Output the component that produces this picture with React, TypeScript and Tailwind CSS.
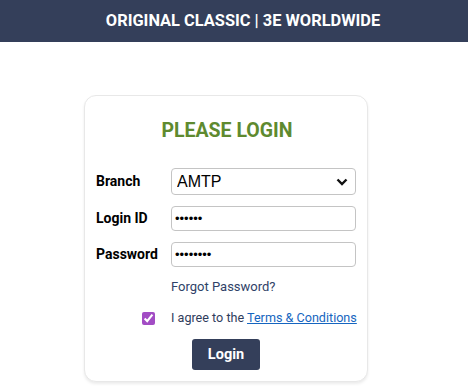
export default function App() {
  return (
    <div className="min-h-screen bg-white font-['Roboto',sans-serif]">
      <header className="h-[42px] bg-[#343f5a] flex items-center justify-center pl-[18px]">
        <h1 className="text-white font-bold text-[16.4px] tracking-[0px]">ORIGINAL CLASSIC | 3E WORLDWIDE</h1>
      </header>
      <div className="pt-[53px] pl-[84px]">
        <div className="w-[284px] bg-white border border-[#e8e8e8] rounded-[12px] shadow-[0_2px_3px_rgba(0,0,0,0.08)] px-[11px] pt-[22px] pb-[11px]">
          <h2 className="text-center text-[#5e8a2f] font-bold text-[19.5px] leading-[26px] pl-[2px]">PLEASE LOGIN</h2>
          <form className="mt-[24px] grid grid-cols-[75px_185px] items-center gap-y-[11px]">
            <label className="font-bold text-[14px] text-black">Branch</label>
            <div className="relative">
              <select className="appearance-none w-full h-[27px] border border-[#c4c4c4] rounded-[4px] pl-[5px] text-[16px] text-black font-['Liberation_Sans',Arial,sans-serif] bg-white outline-none">
                <option>AMTP</option>
              </select>
              <svg className="absolute right-[8px] top-[10px] pointer-events-none" width="12" height="8" viewBox="0 0 12 8">
                <path d="M1.5 1.5 L6 6 L10.5 1.5" fill="none" stroke="#111" strokeWidth="2.4" />
              </svg>
            </div>
            <label className="font-bold text-[14px] text-black">Login ID</label>
            <input type="password" defaultValue="123456" className="w-full h-[25px] border border-[#c4c4c4] rounded-[4px] px-[3px] text-[13px] text-black outline-none font-['Liberation_Sans',Arial,sans-serif]" />
            <label className="font-bold text-[14px] text-black">Password</label>
            <input type="password" defaultValue="12345678" className="w-full h-[25px] border border-[#c4c4c4] rounded-[4px] px-[3px] text-[13px] text-black outline-none font-['Liberation_Sans',Arial,sans-serif]" />
            <div />
            <a className="text-[13px] text-[#2f4268] -mt-[1px]">Forgot Password?</a>
            <div className="flex justify-end pr-[16px] mt-[2px]">
              <input type="checkbox" defaultChecked className="w-[13px] h-[13px] accent-[#a24cc4]" />
            </div>
            <p className="text-[12.6px] text-[#2f3d5c] whitespace-nowrap mt-[1px]">
              I agree to the <a className="text-[#1565c0] underline">Terms &amp; Conditions</a>
            </p>
          </form>
          <div className="flex justify-center mt-[12px]">
            <button className="w-[68px] h-[31px] bg-[#343f5a] rounded-[3px] text-white font-bold text-[14.5px]">Login</button>
          </div>
        </div>
      </div>
    </div>
  );
}
